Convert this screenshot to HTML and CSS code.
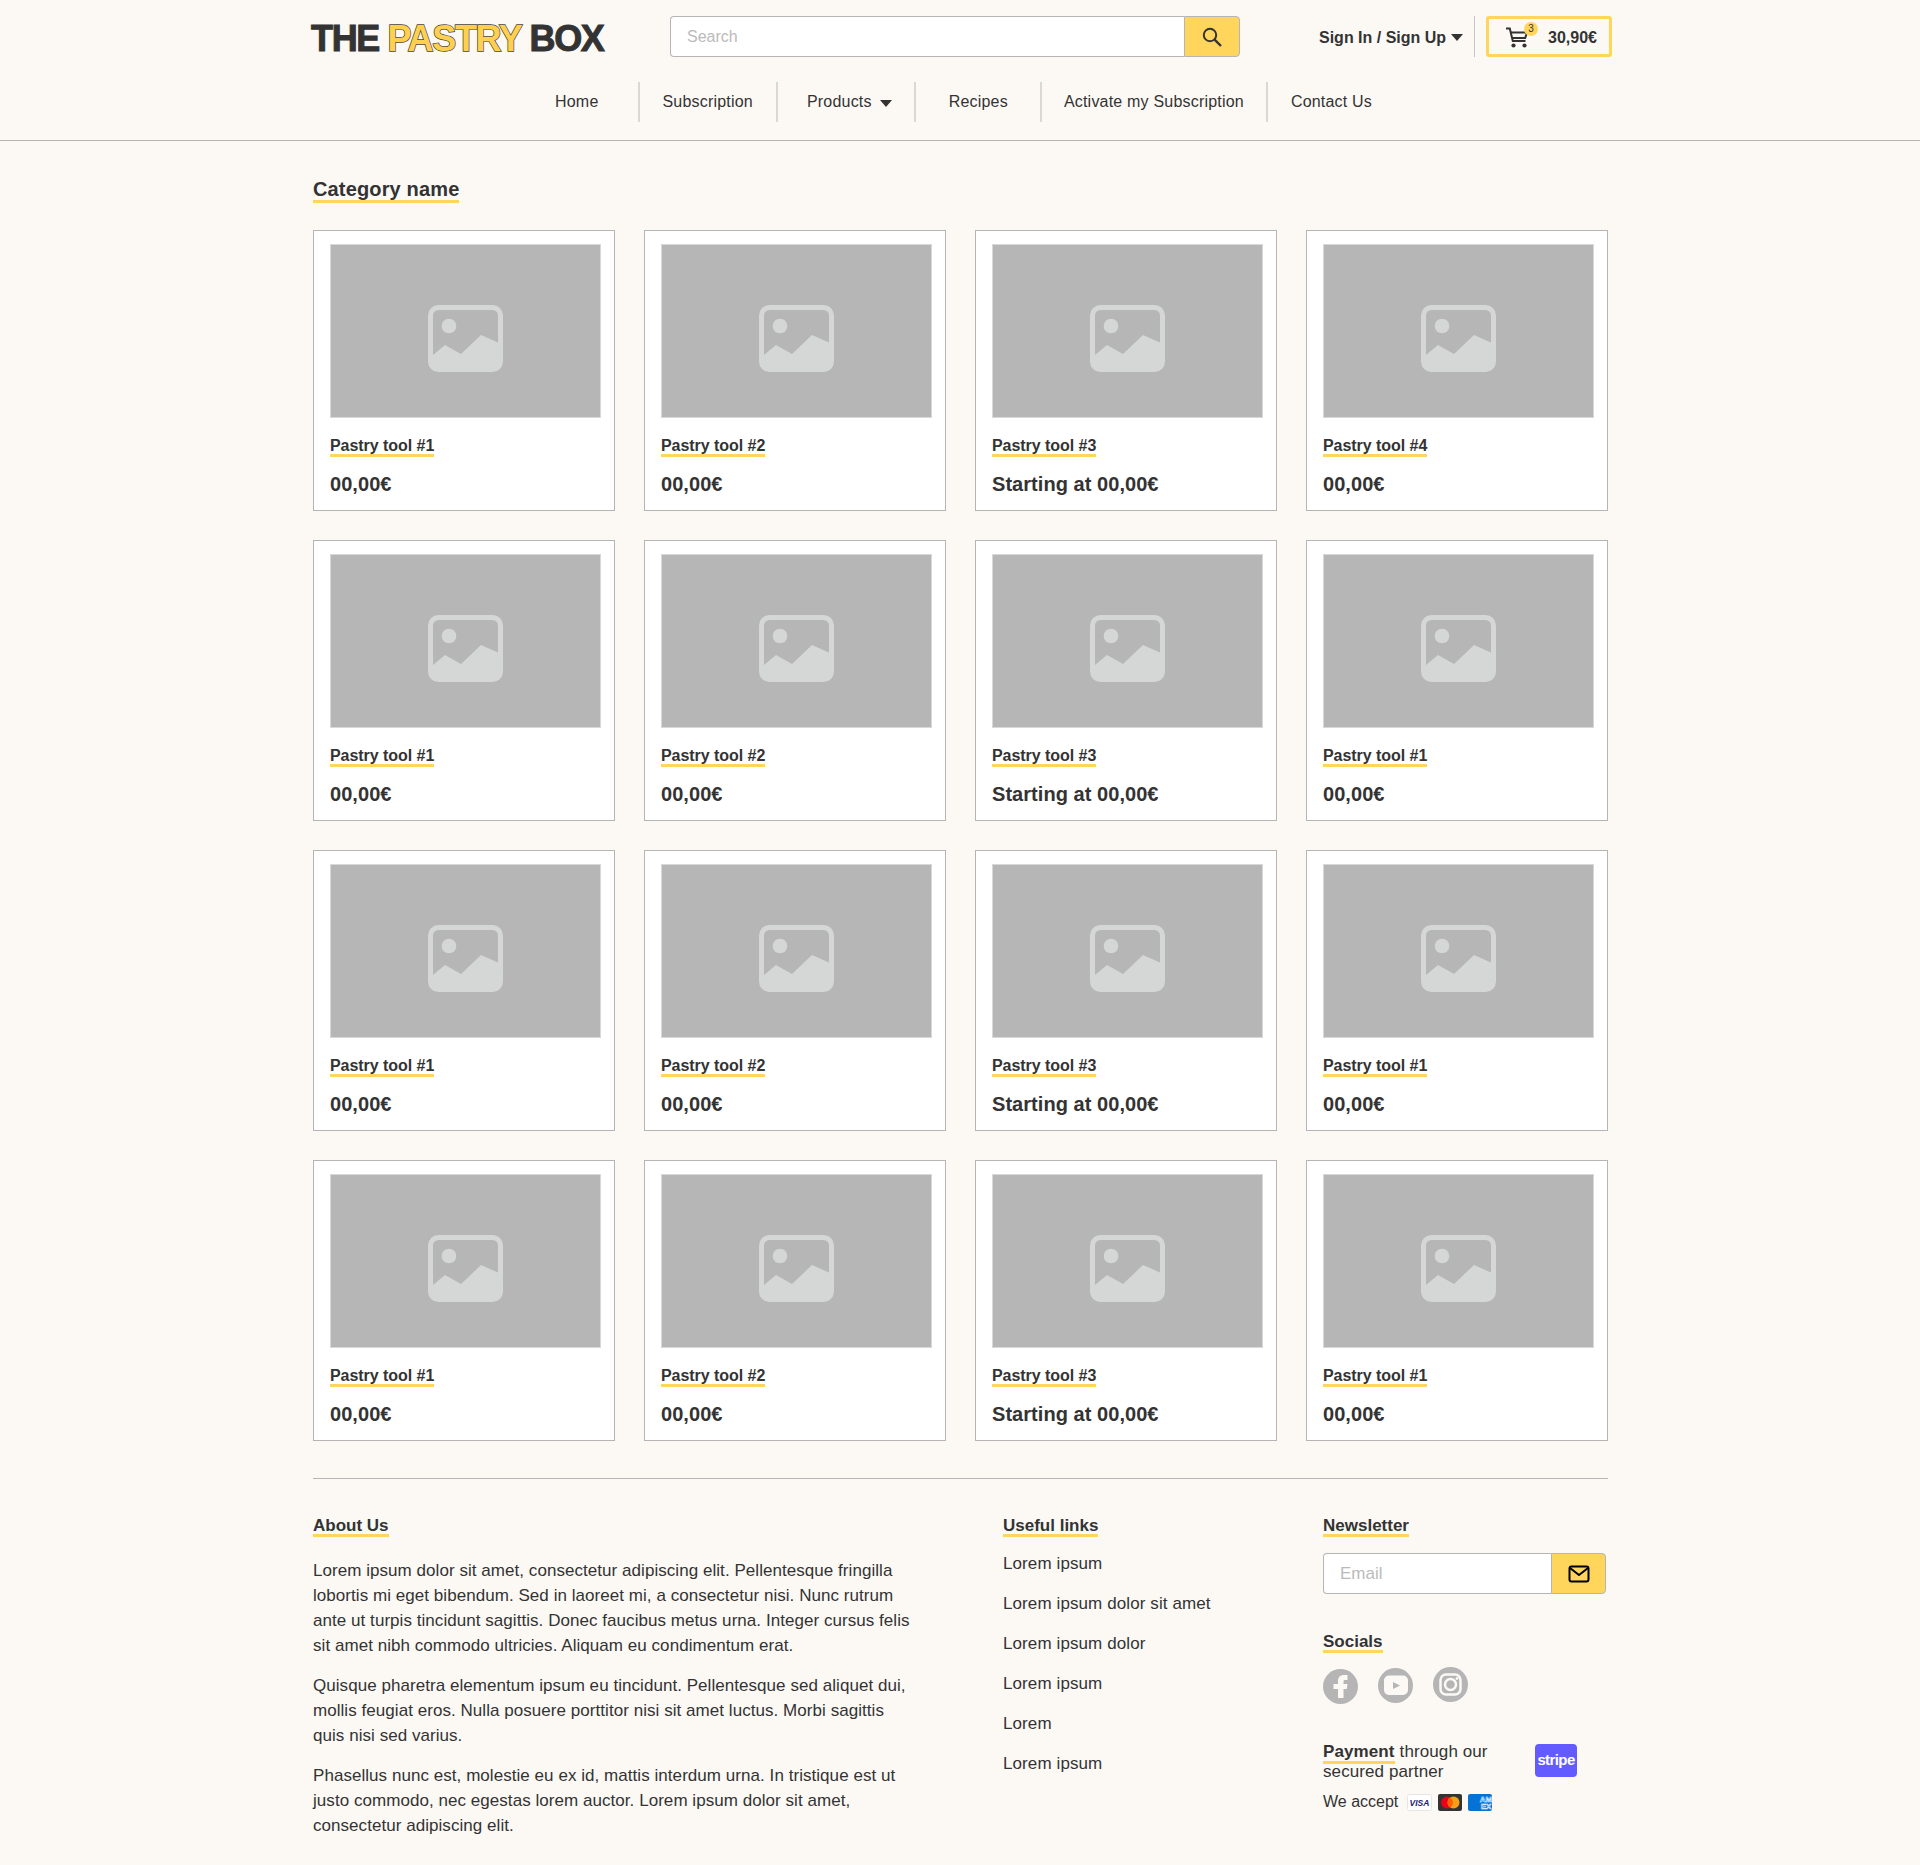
FILE: index.html
```html
<!DOCTYPE html>
<html lang="en">
<head>
    <meta charset="UTF-8">
    <meta name="viewport" content="width=device-width, initial-scale=1.0">
    <title>The Pastry Box</title>
    <link rel="stylesheet" href="styles.css">
</head>
<body>
<svg class="sprite" xmlns="http://www.w3.org/2000/svg">
    <symbol id="placeholder" viewBox="0 0 75 67">
        <rect x="2.5" y="2.5" width="70" height="62" rx="8" fill="none" stroke="#d5d7d6" stroke-width="5"/>
        <circle cx="21" cy="21" r="7.3" fill="#d5d7d6"/>
        <path d="M5 50 17 40 33 49 53 30 71 38V58Q71 64 65 64H10Q4 64 4 58Z" fill="#d5d7d6"/>
    </symbol>
</svg>

<header class="site-header">
    <div class="container">
        <div class="top-row">
            <div class="logo">THE <span class="logo-accent">PASTRY</span> BOX</div>
            <form class="search">
                <input type="text" class="search-input" placeholder="Search">
                <button type="button" class="search-button" aria-label="Search">
                    <svg width="20" height="20" viewBox="0 0 20 20" fill="none" stroke="#333" stroke-width="2"><circle cx="8" cy="8" r="6.2"/><path d="M12.6 12.6 19 19" stroke-width="2.4"/></svg>
                </button>
            </form>
            <a class="sign-in" href="#"><span class="sign-in-text">Sign In / Sign Up</span><span class="caret"></span></a>
            <a class="cart" href="#">
                <span class="cart-icon">
                    <svg width="22" height="21" viewBox="0 0 22 21" fill="none" stroke="#333" stroke-width="2"><path d="M0 1.5h3.800l3 12.500h12.700"/><path d="M4.600 5.500H21l-1.800 5.500H6"/><circle cx="7.500" cy="18.500" r="2.100" fill="#333" stroke="none"/><circle cx="18.500" cy="18.500" r="2.100" fill="#333" stroke="none"/></svg>
                    <span class="cart-badge">3</span>
                </span>
                <span class="cart-total">30,90€</span>
            </a>
        </div>
        <nav class="main-nav">
            <a class="nav-item nav-home" href="#">Home</a>
            <a class="nav-item nav-subscription" href="#">Subscription</a>
            <a class="nav-item nav-products" href="#">Products<span class="caret caret-nav"></span></a>
            <a class="nav-item nav-recipes" href="#">Recipes</a>
            <a class="nav-item nav-activate" href="#">Activate my Subscription</a>
            <a class="nav-item nav-last" href="#">Contact Us</a>
        </nav>
    </div>
</header>

<main class="container">
    <h1 class="category-title"><span class="underlined">Category name</span></h1>
    <div class="product-grid">
        <article class="card"><div class="card-image"><svg class="placeholder"><use href="#placeholder"/></svg></div><h2 class="card-title"><span class="underlined">Pastry tool #1</span></h2><p class="card-price">00,00€</p></article>
        <article class="card"><div class="card-image"><svg class="placeholder"><use href="#placeholder"/></svg></div><h2 class="card-title"><span class="underlined">Pastry tool #2</span></h2><p class="card-price">00,00€</p></article>
        <article class="card"><div class="card-image"><svg class="placeholder"><use href="#placeholder"/></svg></div><h2 class="card-title"><span class="underlined">Pastry tool #3</span></h2><p class="card-price">Starting at 00,00€</p></article>
        <article class="card"><div class="card-image"><svg class="placeholder"><use href="#placeholder"/></svg></div><h2 class="card-title"><span class="underlined">Pastry tool #4</span></h2><p class="card-price">00,00€</p></article>

        <article class="card"><div class="card-image"><svg class="placeholder"><use href="#placeholder"/></svg></div><h2 class="card-title"><span class="underlined">Pastry tool #1</span></h2><p class="card-price">00,00€</p></article>
        <article class="card"><div class="card-image"><svg class="placeholder"><use href="#placeholder"/></svg></div><h2 class="card-title"><span class="underlined">Pastry tool #2</span></h2><p class="card-price">00,00€</p></article>
        <article class="card"><div class="card-image"><svg class="placeholder"><use href="#placeholder"/></svg></div><h2 class="card-title"><span class="underlined">Pastry tool #3</span></h2><p class="card-price">Starting at 00,00€</p></article>
        <article class="card"><div class="card-image"><svg class="placeholder"><use href="#placeholder"/></svg></div><h2 class="card-title"><span class="underlined">Pastry tool #1</span></h2><p class="card-price">00,00€</p></article>

        <article class="card"><div class="card-image"><svg class="placeholder"><use href="#placeholder"/></svg></div><h2 class="card-title"><span class="underlined">Pastry tool #1</span></h2><p class="card-price">00,00€</p></article>
        <article class="card"><div class="card-image"><svg class="placeholder"><use href="#placeholder"/></svg></div><h2 class="card-title"><span class="underlined">Pastry tool #2</span></h2><p class="card-price">00,00€</p></article>
        <article class="card"><div class="card-image"><svg class="placeholder"><use href="#placeholder"/></svg></div><h2 class="card-title"><span class="underlined">Pastry tool #3</span></h2><p class="card-price">Starting at 00,00€</p></article>
        <article class="card"><div class="card-image"><svg class="placeholder"><use href="#placeholder"/></svg></div><h2 class="card-title"><span class="underlined">Pastry tool #1</span></h2><p class="card-price">00,00€</p></article>

        <article class="card"><div class="card-image"><svg class="placeholder"><use href="#placeholder"/></svg></div><h2 class="card-title"><span class="underlined">Pastry tool #1</span></h2><p class="card-price">00,00€</p></article>
        <article class="card"><div class="card-image"><svg class="placeholder"><use href="#placeholder"/></svg></div><h2 class="card-title"><span class="underlined">Pastry tool #2</span></h2><p class="card-price">00,00€</p></article>
        <article class="card"><div class="card-image"><svg class="placeholder"><use href="#placeholder"/></svg></div><h2 class="card-title"><span class="underlined">Pastry tool #3</span></h2><p class="card-price">Starting at 00,00€</p></article>
        <article class="card"><div class="card-image"><svg class="placeholder"><use href="#placeholder"/></svg></div><h2 class="card-title"><span class="underlined">Pastry tool #1</span></h2><p class="card-price">00,00€</p></article>
    </div>
</main>

<footer class="container site-footer">
    <section class="footer-about">
        <h3 class="footer-title"><span class="underlined">About Us</span></h3>
        <p>Lorem ipsum dolor sit amet, consectetur adipiscing elit. Pellentesque fringilla lobortis mi eget bibendum. Sed in laoreet mi, a consectetur nisi. Nunc rutrum ante ut turpis tincidunt sagittis. Donec faucibus metus urna. Integer cursus felis sit amet nibh commodo ultricies. Aliquam eu condimentum erat.</p>
        <p>Quisque pharetra elementum ipsum eu tincidunt. Pellentesque sed aliquet dui, mollis feugiat eros. Nulla posuere porttitor nisi sit amet luctus. Morbi sagittis quis nisi sed varius.</p>
        <p>Phasellus nunc est, molestie eu ex id, mattis interdum urna. In tristique est ut justo commodo, nec egestas lorem auctor. Lorem ipsum dolor sit amet, consectetur adipiscing elit.</p>
    </section>
    <section class="footer-links">
        <h3 class="footer-title"><span class="underlined">Useful links</span></h3>
        <ul class="link-list">
            <li><a href="#">Lorem ipsum</a></li>
            <li><a href="#">Lorem ipsum dolor sit amet</a></li>
            <li><a href="#">Lorem ipsum dolor</a></li>
            <li><a href="#">Lorem ipsum</a></li>
            <li><a href="#">Lorem</a></li>
            <li><a href="#">Lorem ipsum</a></li>
        </ul>
    </section>
    <section class="footer-side">
        <h3 class="footer-title"><span class="underlined">Newsletter</span></h3>
        <form class="newsletter">
            <input type="text" class="newsletter-input" placeholder="Email">
            <button type="button" class="newsletter-button" aria-label="Subscribe">
                <svg width="22" height="18" viewBox="0 0 22 18" fill="none" stroke="#000" stroke-width="2"><rect x="1.5" y="1.5" width="19" height="15" rx="2"/><path d="M2 3l9 7 9-7"/></svg>
            </button>
        </form>

        <h3 class="footer-title socials-title"><span class="underlined">Socials</span></h3>
        <div class="socials">
            <a class="social social-facebook" href="#" aria-label="Facebook">
                <svg width="35" height="35" viewBox="0 0 35 35"><circle cx="17.5" cy="17.5" r="17.5" fill="#b5b5b5"/><path d="M15 29V20h-4.500v-5H15v-3c0-4 2.500-6 6-6h3.500v5H22c-1 0-1.500.5-1.500 1.500V15h4l-.7 5h-3.300v9z" fill="#fcf9f5"/></svg>
            </a>
            <a class="social social-youtube" href="#" aria-label="YouTube">
                <svg width="35" height="35" viewBox="0 0 35 35"><circle cx="17.500" cy="17.500" r="17.500" fill="#b5b5b5"/><rect x="6" y="7.500" width="24" height="19.500" rx="5" fill="#fcf9f5"/><path d="M15 14v7l7-3.500z" fill="#b5b5b5"/></svg>
            </a>
            <a class="social" href="#" aria-label="Instagram">
                <svg width="35" height="35" viewBox="0 0 35 35"><circle cx="17.500" cy="17.500" r="17.500" fill="#b5b5b5"/><rect x="7.500" y="7.500" width="20" height="20" rx="5.500" fill="none" stroke="#fcf9f5" stroke-width="2.500"/><circle cx="17.500" cy="17.500" r="5.500" fill="none" stroke="#fcf9f5" stroke-width="2.500"/><circle cx="24" cy="11.500" r="1.400" fill="#fcf9f5"/></svg>
            </a>
        </div>

        <div class="payment">
            <div class="payment-text">
                <div class="payment-line"><strong class="underlined-thin">Payment</strong><span class="payment-rest">through our</span></div>
                <div class="payment-line">secured partner</div>
            </div>
            <span class="stripe-badge">stripe</span>
        </div>
        <div class="accept">
            <span class="accept-label">We accept</span>
            <svg class="pay-card" width="25" height="17" viewBox="0 0 25 17"><rect x=".5" y=".5" width="24" height="16" rx="2" fill="#fff" stroke="#e6e6e6"/><text x="12.500" y="11.500" text-anchor="middle" class="visa-text">VISA</text></svg>
            <svg class="pay-card" width="24" height="17" viewBox="0 0 24 17"><rect width="24" height="17" rx="2" fill="#333"/><circle cx="9" cy="8.500" r="6" fill="#eb001b"/><circle cx="15.500" cy="8.500" r="6" fill="#f79e1b"/><path d="M12.250 3.500a6 6 0 0 1 0 10 6 6 0 0 1 0-10z" fill="#ff5f00"/></svg>
            <svg class="pay-card" width="24" height="17" viewBox="0 0 24 17"><rect width="24" height="17" rx="2" fill="#0572d6"/><text x="18" y="8" text-anchor="middle" class="amex-text">AM</text><text x="18" y="15" text-anchor="middle" class="amex-text">EX</text></svg>
        </div>
    </section>
</footer>
</body>
</html>
```

FILE: styles.css
```css
body {
    font-family: "Liberation Sans", Arial, sans-serif;
    font-size: 16px;
    margin: 0;
    min-height: 1865px;
    background-color: #fcf9f5;
    color: #333;
}

a {
    color: inherit;
    text-decoration: none;
}

.sprite {
    display: none;
}

.container {
    width: 1295px;
    margin-left: 313px;
}

.underlined {
    display: inline-block;
    border-bottom: 3px solid #ffd55c;
}

/* header */
.site-header {
    height: 140px;
    border-bottom: 1px solid #b5b5b5;
}

.top-row {
    display: flex;
    align-items: center;
    height: 41px;
    padding-top: 16px;
}

.logo {
    flex: none;
    width: 359px;
    margin-left: -2px;
    padding-top: 5px;
    font-size: 36px;
    font-weight: bold;
    letter-spacing: -1.35px;
    color: #333;
    -webkit-text-stroke: 1px #333;
    white-space: nowrap;
}

.logo-accent {
    color: #ffd04f;
    -webkit-text-stroke: 1.4px #4a4430;
    paint-order: stroke fill;
}

.search {
    flex: none;
    display: flex;
    width: 570px;
    height: 41px;
}

.search-input {
    flex: 1;
    min-width: 0;
    box-sizing: border-box;
    padding: 0 16px;
    border: 1px solid #b5b5b5;
    border-right: none;
    border-radius: 4px 0 0 4px;
    background-color: #fff;
    font: 16px "Liberation Sans", Arial, sans-serif;
}

.search-input::placeholder,
.newsletter-input::placeholder {
    color: #bbb;
}

.search-button {
    display: flex;
    align-items: center;
    justify-content: center;
    width: 56px;
    padding: 0;
    border: 1px solid #b5b5b5;
    border-radius: 0 4px 4px 0;
    background-color: #ffd55c;
}

.sign-in {
    flex: none;
    display: flex;
    align-items: center;
    width: 155px;
    height: 41px;
    margin-left: 79px;
    border-right: 1px solid #c4c4c4;
    font-weight: bold;
}

.sign-in-text {
    padding-top: 2px;
}

.caret {
    width: 0;
    height: 0;
    margin-left: 5px;
    margin-top: 2px;
    border-top: 7px solid #333;
    border-left: 6px solid transparent;
    border-right: 6px solid transparent;
}

.cart {
    flex: none;
    display: flex;
    align-items: center;
    box-sizing: border-box;
    width: 126px;
    height: 41px;
    margin-left: 11px;
    padding-left: 17px;
    border: 3px solid #ffd55c;
    border-radius: 3px;
    font-weight: bold;
}

.cart-icon {
    position: relative;
    display: flex;
    width: 22px;
    height: 21px;
    margin-top: 1px;
}

.cart-badge {
    position: absolute;
    top: -5px;
    right: -10px;
    width: 14px;
    height: 14px;
    border-radius: 50%;
    background-color: #ffd55c;
    font-size: 10px;
    font-weight: normal;
    line-height: 14px;
    text-align: center;
}

.cart-total {
    margin-left: 20px;
    padding-top: 2px;
}

.main-nav {
    display: flex;
    align-items: center;
    height: 40px;
    margin-top: 25px;
    padding-left: 201px;
    letter-spacing: .2px;
}

.nav-item {
    display: flex;
    align-items: center;
    height: 40px;
    padding: 0 23px;
    border-right: 2px solid #d8d8d6;
    white-space: nowrap;
}

.nav-home {
    padding: 0 40px 0 41px;
}

.nav-subscription {
    padding: 0 23px 0 22px;
}

.nav-products {
    padding: 0 22px 0 29px;
}

.nav-recipes {
    padding: 0 32px 0 33px;
}

.nav-activate {
    padding: 0 22px;
}

.nav-last {
    border-right: none;
}

.caret-nav {
    margin-left: 8px;
    margin-top: 3px;
}

/* products */
.category-title {
    margin: 0 0 27px;
    padding-top: 37px;
    font-size: 20px;
    letter-spacing: .15px;
    line-height: 22px;
}

.product-grid {
    display: grid;
    grid-template-columns: repeat(4, 302px);
    grid-auto-rows: 281px;
    gap: 29px;
}

.card {
    box-sizing: border-box;
    padding: 13px 13px 0 16px;
    border: 1px solid #b5b5b5;
    background-color: #fff;
}

.card-image {
    display: flex;
    align-items: center;
    justify-content: center;
    box-sizing: border-box;
    height: 174px;
    padding-top: 15px;
    border: 1px solid #d8d8d8;
    background-color: #b6b6b6;
}

.placeholder {
    width: 75px;
    height: 67px;
}

.card-title {
    margin: 19px 0 0;
    font-size: 16px;
    letter-spacing: -.05px;
    line-height: 17px;
}

.card-price {
    margin: 16px 0 0;
    font-size: 20px;
    font-weight: bold;
    letter-spacing: .05px;
    line-height: 23px;
}

/* footer */
.site-footer {
    display: grid;
    grid-template-columns: 690px 320px 1fr;
    margin-top: 37px;
    padding-top: 38px;
    border-top: 1px solid #b5b5b5;
    font-size: 17px;
    letter-spacing: .1px;
}

.footer-title {
    margin: 0;
    font-size: 17px;
    letter-spacing: 0;
    line-height: 17px;
}

.footer-about p {
    width: 605px;
    margin: 0 0 15px;
    letter-spacing: .05px;
    line-height: 25px;
}

.footer-about .footer-title {
    margin-bottom: 21px;
}

.link-list {
    margin: 14px 0 0;
    padding: 0;
    list-style: none;
}

.link-list li {
    margin-bottom: 15px;
    line-height: 25px;
}

.newsletter {
    display: flex;
    width: 283px;
    height: 41px;
    margin-top: 16px;
}

.newsletter-input {
    flex: 1;
    min-width: 0;
    box-sizing: border-box;
    padding: 0 16px;
    border: 1px solid #b5b5b5;
    border-right: none;
    border-radius: 4px 0 0 4px;
    background-color: #fff;
    font: 17px "Liberation Sans", Arial, sans-serif;
}

.newsletter-button {
    display: flex;
    align-items: center;
    justify-content: center;
    width: 55px;
    padding: 0;
    border: 1px solid #b5b5b5;
    border-radius: 0 4px 4px 0;
    background-color: #ffd55c;
}

.socials-title {
    margin-top: 39px;
}

.socials {
    display: flex;
    align-items: flex-start;
    gap: 20px;
    margin-top: 14px;
}

.social {
    display: flex;
}

.social-facebook {
    margin-top: 2px;
}

.social-youtube {
    margin-top: 1px;
}

.payment {
    display: flex;
    margin-top: 38px;
}

.payment-text {
    width: 212px;
    line-height: 20px;
}

.payment-rest {
    margin-left: 5px;
}

.underlined-thin {
    border-bottom: 3px solid #ffd55c;
}

.stripe-badge {
    width: 42px;
    height: 33px;
    margin-top: 2px;
    border-radius: 4px;
    background-color: #635bff;
    color: #fff;
    font-size: 15px;
    font-weight: bold;
    letter-spacing: -.6px;
    line-height: 31px;
    text-align: center;
}

.accept {
    display: flex;
    align-items: center;
    gap: 6px;
    height: 20px;
    margin-top: 10px;
    font-size: 16px;
    letter-spacing: 0;
}

.accept-label {
    margin-right: 3px;
}

.visa-text {
    font-family: "Liberation Sans", Arial, sans-serif;
    font-size: 8.5px;
    font-style: italic;
    font-weight: bold;
    fill: #1a1f71;
}

.amex-text {
    font-family: "Liberation Sans", Arial, sans-serif;
    font-size: 8px;
    font-weight: bold;
    fill: #0572d6;
    stroke: #fff;
    stroke-width: .5px;
}
```
